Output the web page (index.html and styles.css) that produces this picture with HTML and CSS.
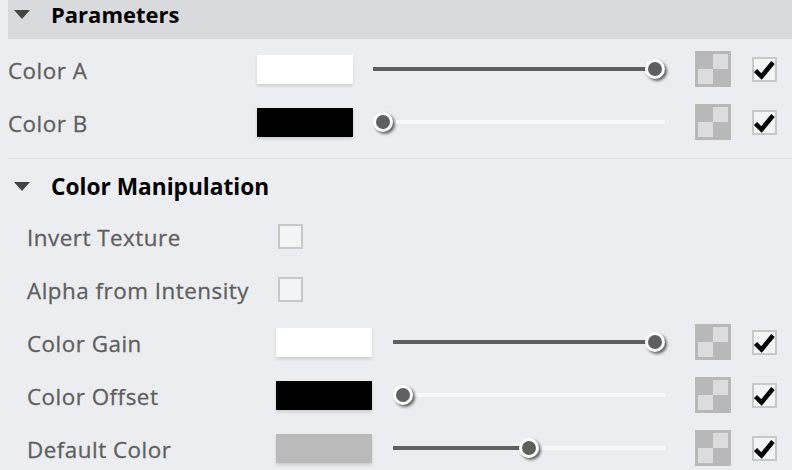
FILE: index.html
```html
<!DOCTYPE html>
<html lang="en">
<head>
<meta charset="utf-8">
<title>Parameters</title>
<link rel="stylesheet" href="styles.css">
</head>
<body>
<main class="panel">
  <section>
    <header class="section-head section-head--filled">
      <svg class="caret" viewBox="0 0 16 9"><path d="M0 0H16L8 9Z"/></svg>
      <h2>Parameters</h2>
    </header>
    <div class="rows rows--top">
      <div class="row">
        <span class="label">Color A</span>
        <span class="swatch swatch--white"></span>
        <div class="slider"><span class="track"><span class="fill" style="width:100%"></span></span><span class="thumb-lane"><span class="thumb" style="left:100%"></span></span></div>
        <span class="checker"><i></i><i></i></span>
        <span class="check"><svg viewBox="0 0 21 21"><path d="M1.5 11.5L7.5 17.5L19 3.5"/></svg></span>
      </div>
      <div class="row">
        <span class="label">Color B</span>
        <span class="swatch swatch--black"></span>
        <div class="slider"><span class="track"><span class="fill" style="width:0%"></span></span><span class="thumb-lane"><span class="thumb" style="left:0%"></span></span></div>
        <span class="checker"><i></i><i></i></span>
        <span class="check"><svg viewBox="0 0 21 21"><path d="M1.5 11.5L7.5 17.5L19 3.5"/></svg></span>
      </div>
    </div>
  </section>
  <hr class="divider">
  <section>
    <header class="section-head section-head--plain">
      <svg class="caret" viewBox="0 0 16 9"><path d="M0 0H16L8 9Z"/></svg>
      <h2>Color Manipulation</h2>
    </header>
    <div class="rows rows--indented">
      <div class="row">
        <span class="label">Invert Texture</span>
        <span class="check check--solo"></span>
      </div>
      <div class="row">
        <span class="label">Alpha from Intensity</span>
        <span class="check check--solo"></span>
      </div>
      <div class="row">
        <span class="label">Color Gain</span>
        <span class="swatch swatch--white"></span>
        <div class="slider"><span class="track"><span class="fill" style="width:100%"></span></span><span class="thumb-lane"><span class="thumb" style="left:100%"></span></span></div>
        <span class="checker"><i></i><i></i></span>
        <span class="check"><svg viewBox="0 0 21 21"><path d="M1.5 11.5L7.5 17.5L19 3.5"/></svg></span>
      </div>
      <div class="row">
        <span class="label">Color Offset</span>
        <span class="swatch swatch--black"></span>
        <div class="slider"><span class="track"><span class="fill" style="width:0%"></span></span><span class="thumb-lane"><span class="thumb" style="left:0%"></span></span></div>
        <span class="checker"><i></i><i></i></span>
        <span class="check"><svg viewBox="0 0 21 21"><path d="M1.5 11.5L7.5 17.5L19 3.5"/></svg></span>
      </div>
      <div class="row">
        <span class="label">Default Color</span>
        <span class="swatch swatch--grey"></span>
        <div class="slider"><span class="track"><span class="fill" style="width:50%"></span></span><span class="thumb-lane"><span class="thumb" style="left:50%"></span></span></div>
        <span class="checker"><i></i><i></i></span>
        <span class="check"><svg viewBox="0 0 21 21"><path d="M1.5 11.5L7.5 17.5L19 3.5"/></svg></span>
      </div>
    </div>
  </section>
</main>
</body>
</html>
```
FILE: styles.css
```css
html, body {
  margin: 0;
  height: 470px;
  overflow: hidden;
  background: #ecedf0;
}

.panel {
  padding-left: 8px;
  font-family: "Open Sans", "Noto Sans", sans-serif;
}

.section-head {
  display: flex;
  align-items: center;
  box-sizing: border-box;
}

.section-head h2 {
  margin: 0 0 0 21px;
  font-size: 22px;
  font-weight: 700;
  line-height: 30px;
  color: #000;
}

.section-head--filled {
  height: 39px;
  padding: 0 0 10px 6px;
  background: #d9dadd;
}

.section-head--filled h2 {
  margin-bottom: 2px;
}

.section-head--plain {
  height: 40px;
  margin-left: -8px;
  padding: 14px 0 0 14px;
}

.section-head--plain h2 {
  margin-top: 2px;
  font-size: 22.7px;
}

.caret {
  width: 16px;
  height: 9px;
  fill: #444;
}

.rows--top {
  padding-top: 4px;
}

.rows--indented {
  padding-top: 11px;
  padding-left: 19px;
}

.row {
  display: grid;
  grid-template-columns: 249px 96px 1fr 36px 46px;
  align-items: center;
  height: 53px;
  padding-right: 15px;
}

.label {
  margin-top: 2px;
  font-size: 22.4px;
  font-weight: 500;
  letter-spacing: 0.5px;
  line-height: 30px;
  color: #5f5f5f;
  -webkit-text-stroke: 0.3px #5f5f5f;
  white-space: nowrap;
}

.swatch {
  height: 29px;
  box-shadow: 0 2px 3px rgba(0, 0, 0, 0.14);
}

.swatch--white { background: #fff; }
.swatch--black { background: #000; }
.swatch--grey { background: #bababa; }

.slider {
  position: relative;
  height: 20px;
  margin: 0 30px 1px 20px;
}

.rows--indented .slider {
  margin-left: 21px;
}

.track {
  position: absolute;
  left: 0;
  right: 0;
  top: 8px;
  height: 4px;
  background: #f8f9fb;
}

.fill {
  display: block;
  height: 100%;
  background: #5f5f5f;
}

.thumb-lane {
  position: absolute;
  left: 10px;
  right: 10px;
  top: 0;
  bottom: 0;
}

.thumb {
  position: absolute;
  top: 0;
  width: 20px;
  height: 20px;
  margin-left: -10px;
  box-sizing: border-box;
  border: 3px solid #fff;
  border-radius: 50%;
  background: #5f5f5f;
  box-shadow: 2px 2px 3px rgba(0, 0, 0, 0.6);
}

.checker {
  display: grid;
  grid-template-columns: 15px 15px;
  grid-template-rows: 15px 15px;
  width: 36px;
  height: 36px;
  margin-bottom: 1px;
  padding: 3px;
  box-sizing: border-box;
  background: #b8b8b8;
}

.checker i {
  background: #dcdcde;
}

.checker i:first-child { grid-area: 1 / 2; }
.checker i:last-child { grid-area: 2 / 1; }

.check {
  display: block;
  width: 25px;
  height: 25px;
  margin-left: 21px;
  box-sizing: border-box;
  border: 2px solid #c8c8c8;
  background: #f3f4f6;
}

.check--solo {
  margin-left: 2px;
  grid-column: 2;
}

.check svg {
  display: block;
  width: 21px;
  height: 21px;
  fill: none;
  stroke: #000;
  stroke-width: 4.5px;
}

.divider {
  height: 1px;
  margin: 9px 0 0;
  border: 0;
  background: #dcdde0;
}
```
